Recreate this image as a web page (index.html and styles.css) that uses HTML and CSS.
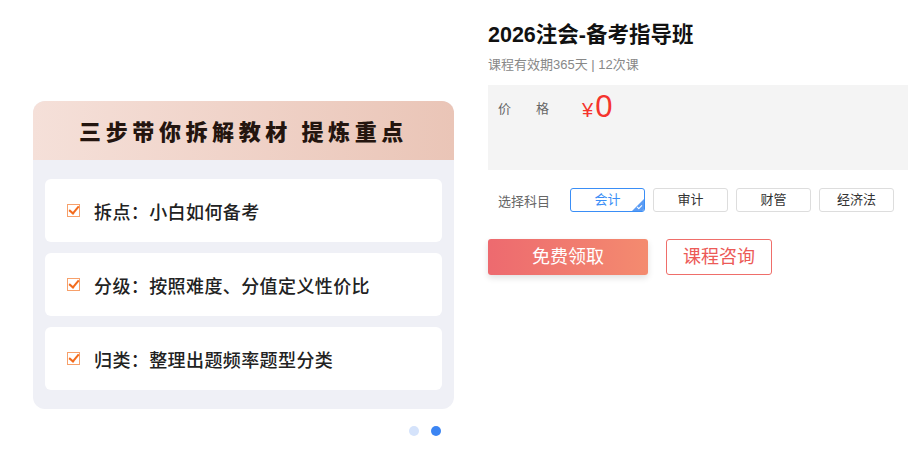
FILE: index.html
```html
<!DOCTYPE html>
<html>
<head>
<meta charset="utf-8">
<title>2026注会-备考指导班</title>
<link rel="stylesheet" href="styles.css">
</head>
<body>
	<div class="page">
		<div class="banner">
			<div class="card">
				<div class="card-head">三步带你拆解教材 提炼重点</div>
				<ul class="card-list">
					<li><span class="check"></span>拆点：小白如何备考</li>
					<li><span class="check"></span>分级：按照难度、分值定义性价比</li>
					<li><span class="check"></span>归类：整理出题频率题型分类</li>
				</ul>
			</div>
			<div class="dots">
				<span class="dot"></span>
				<span class="dot active"></span>
			</div>
		</div>

		<div class="info">
			<h1 class="title">2026注会-备考指导班</h1>
			<p class="sub">课程有效期365天 | 12次课</p>
			<div class="price-box">
				<span class="price-label">价<i></i>格</span>
				<span class="price"><em>¥</em>0</span>
			</div>
			<div class="subjects">
				<span class="subjects-label">选择科目</span>
				<a class="subject on">会计</a>
				<a class="subject">审计</a>
				<a class="subject">财管</a>
				<a class="subject">经济法</a>
			</div>
			<div class="actions">
				<a class="btn-get">免费领取</a>
				<a class="btn-ask">课程咨询</a>
			</div>
		</div>
	</div>
</body>
</html>
```

FILE: styles.css
```css
* {
	box-sizing: border-box;
}

body, ul, li, h1, p {
	margin: 0;
	padding: 0;
}

body {
	font-family: "Microsoft YaHei", "Noto Sans CJK SC", "Liberation Sans", sans-serif;
	background: #fff;
	color: #222;
}

.page {
	display: flex;
	padding-left: 33px;
}

/* left banner */
.banner {
	width: 421px;
	padding-top: 101px;
}

.card {
	border-radius: 12px;
	overflow: hidden;
	background: #eff0f6;
}

.card-head {
	height: 59px;
	line-height: 59px;
	text-align: center;
	font-size: 22px;
	font-weight: 900;
	letter-spacing: 4.6px;
	color: #24150f;
	background: linear-gradient(90deg, #f5e0d9, #eac5b7);
}

.card-list {
	list-style: none;
	padding: 19px 12px 19px 12px;
}

.card-list li {
	display: flex;
	align-items: center;
	height: 63px;
	margin-bottom: 11px;
	padding-left: 22px;
	background: #fff;
	border-radius: 6px;
	font-size: 18px;
	font-weight: 500;
	letter-spacing: 0.4px;
	color: #222;
}

.card-list li:last-child {
	margin-bottom: 0;
}

.check {
	position: relative;
	width: 13px;
	height: 13px;
	margin-right: 14px;
	border: 1.5px solid #f7a06a;
}

.check:after {
	content: "";
	position: absolute;
	left: 3px;
	top: -1px;
	width: 4px;
	height: 8px;
	border-right: 2px solid #f26b1d;
	border-bottom: 2px solid #f26b1d;
	transform: rotate(40deg);
}

.dots {
	display: flex;
	justify-content: flex-end;
	gap: 12px;
	padding: 17px 13px 0 0;
}

.dot {
	width: 10px;
	height: 10px;
	border-radius: 50%;
	background: #d5e3fb;
}

.dot.active {
	background: #3c85f3;
}

/* right info */
.info {
	flex: 1;
	margin-left: 34px;
	padding-top: 22px;
	font-family: "Liberation Sans", "Noto Sans CJK SC", sans-serif;
}

.title {
	font-size: 21.5px;
	font-weight: bold;
	line-height: 26px;
	color: #111;
}

.sub {
	margin-top: 8px;
	font-size: 13px;
	line-height: 18px;
	color: #888;
}

.price-box {
	display: flex;
	align-items: flex-start;
	height: 85px;
	margin-top: 11px;
	padding: 0 10px;
	background: #f4f4f4;
}

.price-label {
	width: 84px;
	margin-top: 15px;
	font-size: 13px;
	line-height: 18px;
	color: #666;
}

.price-label i {
	display: inline-block;
	width: 25px;
}

.price {
	margin-top: 4px;
	font-size: 31px;
	line-height: 36px;
	color: #f5342d;
}

.price em {
	font-style: normal;
	font-size: 20px;
	margin-right: 2px;
}

.subjects {
	display: flex;
	align-items: center;
	margin-top: 18px;
	padding-left: 10px;
}

.subjects-label {
	width: 72px;
	font-size: 13px;
	color: #666;
}

.subject {
	position: relative;
	width: 75px;
	height: 24px;
	line-height: 22px;
	margin-right: 8px;
	text-align: center;
	font-size: 13px;
	color: #333;
	border: 1px solid #ddd;
	border-radius: 3px;
	overflow: hidden;
}

.subject.on {
	color: #3a8ef6;
	border-color: #3a8ef6;
}

.subject.on:after {
	content: "";
	position: absolute;
	right: 0;
	bottom: 0;
	border-style: solid;
	border-width: 0 0 12px 12px;
	border-color: transparent transparent #5b9cf4 transparent;
}

.subject.on:before {
	content: "";
	position: absolute;
	z-index: 1;
	right: 2px;
	bottom: 3px;
	width: 4px;
	height: 2px;
	border-left: 1px solid #fff;
	border-bottom: 1px solid #fff;
	transform: rotate(-45deg);
}

.actions {
	display: flex;
	margin-top: 27px;
}

.btn-get {
	width: 160px;
	height: 36px;
	line-height: 36px;
	text-align: center;
	font-size: 18px;
	color: #fff;
	border-radius: 3px;
	background: linear-gradient(90deg, #ed6a6f, #f48b6f);
	box-shadow: 0 3px 6px rgba(0, 0, 0, 0.12);
}

.btn-ask {
	width: 106px;
	height: 36px;
	line-height: 34px;
	margin-left: 18px;
	text-align: center;
	font-size: 18px;
	color: #ec5a57;
	border: 1px solid #ef6e6a;
	border-radius: 3px;
}
```
